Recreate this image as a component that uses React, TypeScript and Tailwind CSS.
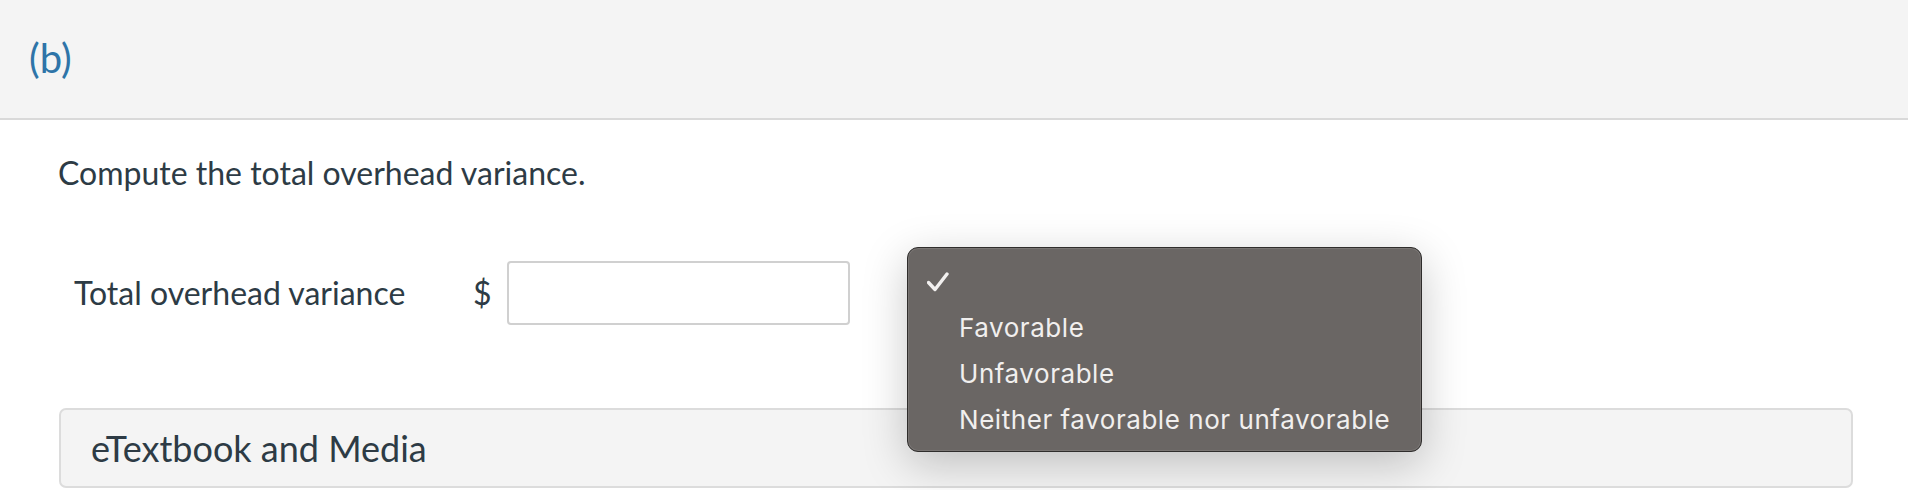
import React from "react";

const options = ["Favorable", "Unfavorable", "Neither favorable nor unfavorable"];

const CheckMark = () => (
  <svg width="22" height="20" viewBox="0 0 22 20" fill="none">
    <path
      d="M1.5 10.5 L8 17.5 L20 2"
      stroke="#f2f0ef"
      strokeWidth="3.4"
      strokeLinecap="round"
      strokeLinejoin="round"
    />
  </svg>
);

const App = () => {
  return (
    <div className="relative w-[1908px] h-[490px] overflow-hidden bg-white font-['Lato',sans-serif] text-[#2d3b45]">
      {/* part header */}
      <div className="h-[120px] bg-[#f4f4f4] border-b-2 border-[#d9d9d9] flex items-center pl-[29px] pb-[2px]">
        <span className="text-[40px] text-[#2e74a8] leading-none">(b)</span>
      </div>

      <div className="pl-[58px] pr-[55px]">
        <p className="mt-[34px] text-[32px] leading-[38px]">
          Compute the total overhead variance.
        </p>

        <div className="flex items-center mt-[69px] h-[64px]">
          <span className="ml-[16px] text-[32px] leading-[38px] w-[399px]">
            Total overhead variance
          </span>
          <span className="text-[32px] leading-[38px] mr-[15px]">$</span>
          <div className="w-[343px] h-[64px] rounded-[4px] border-2 border-[#d0d0d0] bg-white" />
        </div>

        <div className="mt-[83px] ml-[1px] h-[80px] rounded-[7px] border-2 border-[#dcdcdc] bg-[#f4f4f4] pl-[30px] flex items-center">
          <span className="text-[36px] leading-[42px] text-[#2d3b45]">
            eTextbook and Media
          </span>
        </div>
      </div>

      {/* native select popup */}
      <div className="absolute left-[907px] top-[247px] w-[515px] h-[205px] rounded-[11px] border border-[#2f2d2c] bg-[#6a6664] shadow-[0_12px_45px_rgba(0,0,0,0.22),inset_0_0_0_1px_rgba(255,255,255,0.1)] pt-[11px] font-['Inter',sans-serif] text-[26px] tracking-[0.55px] text-[#f1efee]">
        <div className="h-[46px] flex items-center pl-[19px]">
          <CheckMark />
        </div>
        {options.map((opt) => (
          <div key={opt} className="h-[46px] flex items-center pl-[51px] leading-none">
            {opt}
          </div>
        ))}
      </div>
    </div>
  );
};

export default App;
